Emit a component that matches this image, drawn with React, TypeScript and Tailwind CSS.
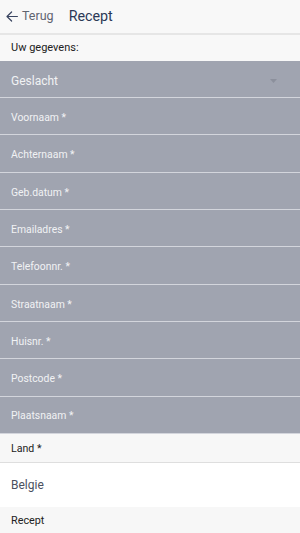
import React from 'react';

const fields = [
    'Voornaam *',
    'Achternaam *',
    'Geb.datum *',
    'Emailadres *',
    'Telefoonnr. *',
    'Straatnaam *',
    'Huisnr. *',
    'Postcode *',
    'Plaatsnaam *',
];

const BackArrow = () => (
    <svg width="12" height="11" viewBox="0 0 12 11" fill="none" stroke="#3a4560" strokeWidth={1.2} strokeLinecap="round" strokeLinejoin="round">
        <path d="M11.4 5.5H1M5.6 1L1 5.5L5.6 10" />
    </svg>
);

const App: React.FC = () => {
    return (
        <div className="w-[300px] h-[533px] overflow-hidden bg-[#f8f8f8] font-['Roboto',sans-serif]">
            {/* header */}
            <div className="h-[35px] flex items-center border-b-2 border-[#e6e6e6] bg-[#f8f8f8]">
                <button className="flex items-center pl-[6px] text-[12.5px] text-[#5f6470]">
                    <BackArrow />
                    <span className="ml-[4px]">Terug</span>
                </button>
                <span className="ml-[15px] text-[14.3px] text-[#2b3856]">Recept</span>
            </div>

            <div className="h-[26px] flex items-center px-[11px] pt-[1px] text-[11px] text-[#222]">Uw gegevens:</div>

            {/* form */}
            <div className="bg-[#a0a4b0]">
                <div className="h-[37px] flex items-center justify-between px-[11px] pt-[3px] border-b border-[#d3d5dc]">
                    <span className="text-[12px] text-[#f1f2f4]">Geslacht</span>
                    <svg width="7" height="4" viewBox="0 0 7 4" className="mr-[12px]">
                        <path d="M0 0H7L3.5 4Z" fill="#8c909c" />
                    </svg>
                </div>
                {fields.map((f) => (
                    <div key={f} className="h-[37.33px] flex items-center px-[11px] pt-[3px] border-b border-[#d3d5dc] text-[10.4px] text-[#f1f2f4]">
                        {f}
                    </div>
                ))}
            </div>

            <div className="h-[29px] flex items-center px-[11px] pt-[2px] border-b border-[#dedede] bg-[#f7f7f7] text-[10.6px] text-[#222]">Land *</div>
            <div className="h-[44px] flex items-center px-[11px] pt-[1px] bg-white text-[12px] text-[#4a5060]">Belgie</div>
            <div className="h-[26px] flex items-center px-[11px] pt-[2px] bg-[#f7f7f7] text-[10.8px] text-[#222]">Recept</div>
        </div>
    );
};

export default App;
